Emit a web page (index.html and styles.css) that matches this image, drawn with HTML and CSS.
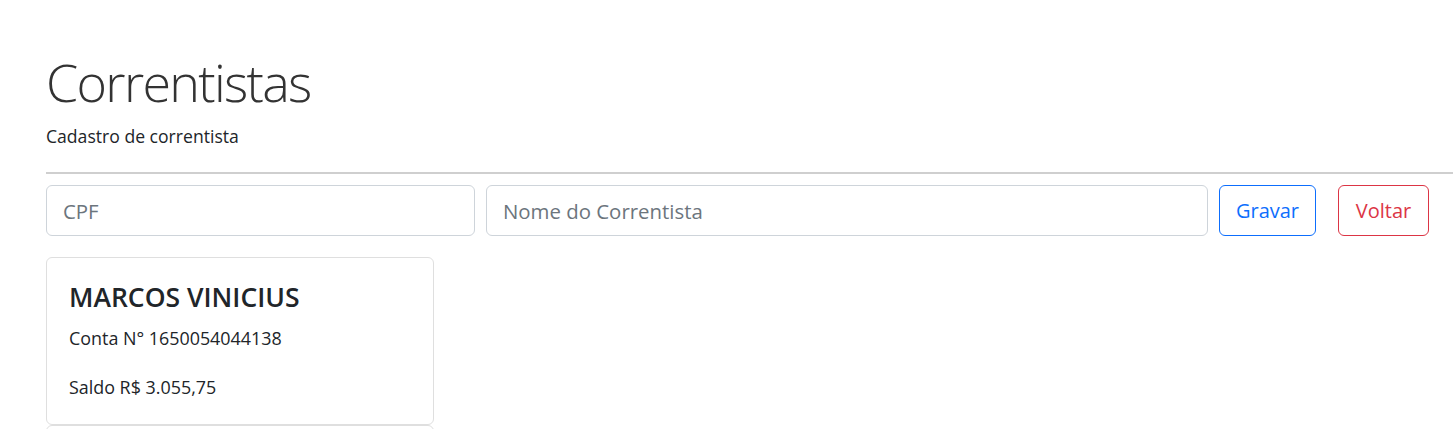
FILE: index.html
```html
<!DOCTYPE html>
<html lang="pt-BR">
<head>
<meta charset="utf-8">
<title>Correntistas</title>
<link rel="stylesheet" href="styles.css">
</head>
<body>
<div class="page">
  <header class="hero">
    <h1 class="display">Correntistas</h1>
    <p class="lead">Cadastro de correntista</p>
  </header>
  <hr class="divider">
  <form class="form-row">
    <input class="field field-cpf" type="text" placeholder="CPF">
    <input class="field field-nome" type="text" placeholder="Nome do Correntista">
    <button type="button" class="btn btn-blue">Gravar</button>
    <button type="button" class="btn btn-red">Voltar</button>
  </form>
  <div class="cards">
    <div class="card">
      <h4 class="card-title">MARCOS VINICIUS</h4>
      <p class="card-line">Conta N° 1650054044138</p>
      <p class="card-line card-saldo">Saldo R$ 3.055,75</p>
    </div>
    <div class="card card-next"></div>
  </div>
</div>
</body>
</html>
```

FILE: styles.css
```css
* { box-sizing: border-box; }
html, body {
  margin: 0;
  padding: 0;
  background: #fff;
  overflow: hidden;
}
body {
  font-family: "Open Sans", "Noto Sans", sans-serif;
  color: #212529;
  font-size: 16px;
}
.page {
  padding: 0 0 0 46px;
}
.hero {
  padding-top: 51px;
}
.display {
  margin: 0;
  font-size: 52px;
  font-weight: 300;
  line-height: 62px;
  color: #333;
  letter-spacing: -1.7px;
}
.lead {
  margin: 10px 0 0 0;
  font-size: 17.6px;
  line-height: 26px;
  color: #212529;
}
.divider {
  margin: 23px 0 11px 0;
  border: 0;
  border-top: 2px solid #cfcfcf;
  height: 0;
}
.form-row {
  display: flex;
  align-items: center;
  margin: 0;
}
.field {
  flex-shrink: 0;
  height: 51px;
  border: 1px solid #ced4da;
  border-radius: 6px;
  padding: 0 16px;
  font-family: inherit;
  font-size: 20.4px;
  color: #212529;
  background: #fff;
}
.field::placeholder { color: #6c757d; }
.field-cpf { width: 429px; margin-right: 11px; }
.field-nome { width: 722px; margin-right: 11px; }
.btn {
  flex-shrink: 0;
  height: 51px;
  border-radius: 6px;
  background: #fff;
  font-family: inherit;
  font-size: 20px;
  padding: 0 10px;
  cursor: pointer;
}
.btn-blue {
  width: 97px;
  border: 1px solid #0d6efd;
  color: #0d6efd;
  margin-right: 22px;
}
.btn-red {
  width: 91px;
  border: 1px solid #dc3545;
  color: #dc3545;
}
.cards {
  margin-top: 21px;
  width: 388px;
}
.card {
  border: 1px solid #dfdfdf;
  border-radius: 6px;
  padding: 24px 22px 20px 22px;
  height: 168px;
}
.card-title {
  margin: 0;
  font-size: 26.5px;
  font-weight: 600;
  line-height: 30px;
  color: #212529;
}
.card-line {
  margin: 13px 0 0 0;
  font-size: 17.9px;
  line-height: 26px;
}
.card-saldo {
  margin-top: 23px;
}
.card-next {
  margin-top: 0;
  height: 40px;
}
```
